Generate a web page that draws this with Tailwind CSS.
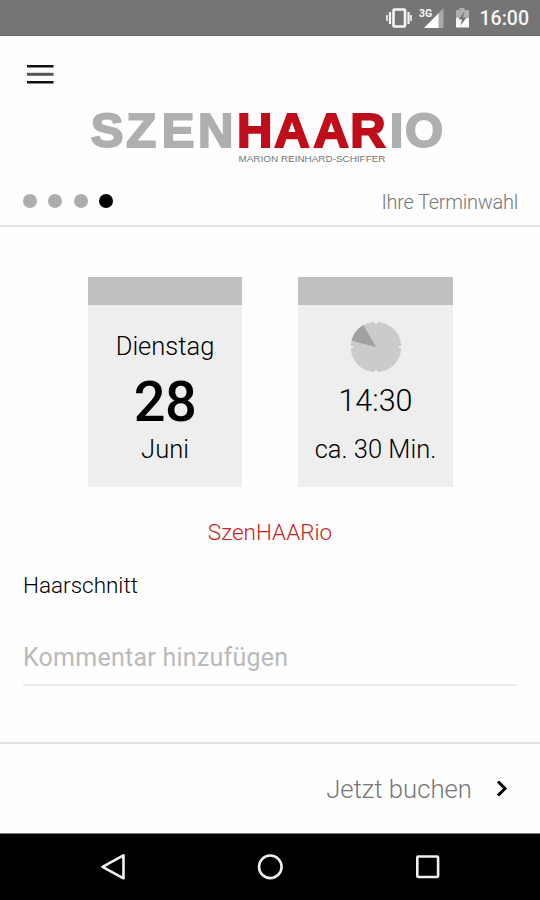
<!DOCTYPE html>
<html lang="de">
<head>
<meta charset="utf-8">
<title>SzenHAARio – Ihre Terminwahl</title>
<script src="https://cdn.jsdelivr.net/npm/@tailwindcss/browser@4"></script>
</head>
<body class="bg-white">
<div class="w-[540px] h-[900px] flex flex-col overflow-hidden bg-[#fefefe] font-['Roboto',sans-serif] font-light text-black whitespace-nowrap">
  <!-- Status bar -->
  <div class="h-9 shrink-0 bg-[#757575] border-b border-[#686868] flex items-center justify-end pr-[11px]">
    <svg width="90" height="36" viewBox="384 0 90 36" class="mr-[6px]">
      <rect x="393.500" y="9.500" width="11.500" height="17" rx="1" fill="none" stroke="#f5f5f5" stroke-width="2.600"/>
      <path d="M390 12v12M408.500 12v12" stroke="#f5f5f5" stroke-width="2.200"/>
      <path d="M387 15v6M411 15v6" stroke="#dedede" stroke-width="2"/>
      <text x="419" y="17" font-size="11" font-weight="700" fill="#f5f5f5" textLength="13" lengthAdjust="spacingAndGlyphs">3G</text>
      <path d="M443.500 8v20H424z" fill="#a9a9a9"/>
      <path d="M438.500 13.500v14.500H424z" fill="#fff"/>
      <path d="M459.500 8h5v2h4.500v8h-13v-8h3.500z" fill="#b0b0b0"/>
      <path d="M456 18h13v9.500h-13z" fill="#fafafa"/>
      <path d="M464.500 11.500l-6 8h3.500l-1.500 6 6-8h-3.500z" fill="#757575"/>
    </svg>
    <span class="text-[19.500px] leading-9 font-medium text-[#f5f5f5] pt-[3px]">16:00</span>
  </div>
  <!-- Header -->
  <header class="h-[140px] shrink-0 flex flex-col">
    <svg width="540" height="60" viewBox="0 36 540 60" fill="none" stroke-width="2.400">
      <path d="M27 66.300h26.500M27 82.300h26.500" stroke="#111"/>
      <path d="M27 74.300h26.500" stroke="#555" stroke-width="3"/>
    </svg>
    <svg width="540" height="80" viewBox="0 96 540 80" font-family="Liberation Sans, sans-serif">
      <g font-size="49" font-weight="700" stroke-width="2">
        <text x="90.700 126.300 161.800 198" y="147" fill="#aeb0b0" stroke="#aeb0b0">SZEN</text>
        <text x="236.900 274.300 313.500 350.200" y="147" fill="#bf0d19" stroke="#bf0d19">HAAR</text>
        <text x="389.800 405" y="147" fill="#aeb0b0" stroke="#aeb0b0">IO</text>
      </g>
      <text x="238.500" y="162.300" font-size="9.500" font-weight="400" textLength="147" lengthAdjust="spacingAndGlyphs" fill="#777">MARION REINHARD-SCHIFFER</text>
    </svg>
  </header>
  <!-- Step indicator -->
  <div class="h-[51px] shrink-0 border-b-2 border-[#e2e2e2] flex items-center justify-between pl-[23px] pr-[22px]">
    <div class="flex gap-[11.300px]">
      <i class="size-[14px] rounded-full bg-[#adadad]"></i>
      <i class="size-[14px] rounded-full bg-[#adadad]"></i>
      <i class="size-[14px] rounded-full bg-[#adadad]"></i>
      <i class="size-[14px] rounded-full bg-black"></i>
    </div>
    <span class="text-[20px] tracking-[-0.250px] text-[#777] pt-[3px]">Ihre Terminwahl</span>
  </div>
  <!-- Appointment -->
  <main class="h-[515px] shrink-0 pt-[50px] flex flex-col">
    <div class="flex pl-[88px] gap-14">
      <section class="w-[154px] h-[210px] bg-[#eee] border-t-[28px] border-[#c0c0c0] flex flex-col items-center">
        <span class="text-[25.500px] leading-[30px] mt-[26px]">Dienstag</span>
        <span class="text-[56px] leading-[60px] font-medium mt-[11px] tracking-[-0.500px]">28</span>
        <span class="text-[25.500px] leading-[30px] mt-[2px]">Juni</span>
      </section>
      <section class="w-[155px] h-[210px] bg-[#eee] border-t-[28px] border-[#c0c0c0] flex flex-col items-center">
        <svg width="52" height="52" viewBox="-26 -26 52 52" class="mt-[16px]">
          <circle r="25.300" fill="#cbcbcb"/>
          <path d="M0 0L-24.500 -6.300A25.300 25.300 0 0 1 -12.600 -21.900z" fill="#a1a1a1"/>
          <path d="M0-26v3M0 26v-3M-26 0h3M26 0h-3" stroke="#f2f2f2" stroke-width="2"/>
        </svg>
        <span class="text-[30.500px] leading-[36px] mt-[10px]">14:30</span>
        <span class="text-[25.500px] leading-[30px] mt-[15px]">ca. 30 Min.</span>
      </section>
    </div>
    <div class="text-center text-[22.500px] leading-7 mt-[31px] text-[#cf2222]">SzenHAARio</div>
    <div class="px-[23px] text-[22.500px] leading-7 mt-[25px]">Haarschnitt</div>
    <div class="mx-[23px] mt-[44px] h-[43px] border-b-2 border-[#ebebeb] text-[25px] tracking-[0.250px] leading-[30px] font-normal text-[#bababa]">Kommentar hinzufügen</div>
  </main>
  <!-- Booking action -->
  <footer class="h-[91px] shrink-0 border-t-2 border-[#e2e2e2] flex items-center justify-end pr-[32px]">
    <span class="text-[25.700px] text-[#777] mr-[24px] pt-px">Jetzt buchen</span>
    <svg width="12" height="18" viewBox="0 0 12 18" fill="none" stroke="#000" stroke-width="3"><path d="M2 1.500l7 7-7 7"/></svg>
  </footer>
  <!-- Navigation bar -->
  <nav class="flex-1 bg-black border-t border-[#777]">
    <svg width="540" height="66" viewBox="0 834 540 66" fill="none" stroke="#f0f0f0" stroke-width="2.600" stroke-linejoin="round">
      <path d="M123.500 855.300v23L102.500 866.800z"/>
      <circle cx="270.300" cy="866.800" r="11.300"/>
      <rect x="417.300" y="856.500" width="20.800" height="20.500" rx="1"/>
    </svg>
  </nav>
</div>
</body>
</html>
